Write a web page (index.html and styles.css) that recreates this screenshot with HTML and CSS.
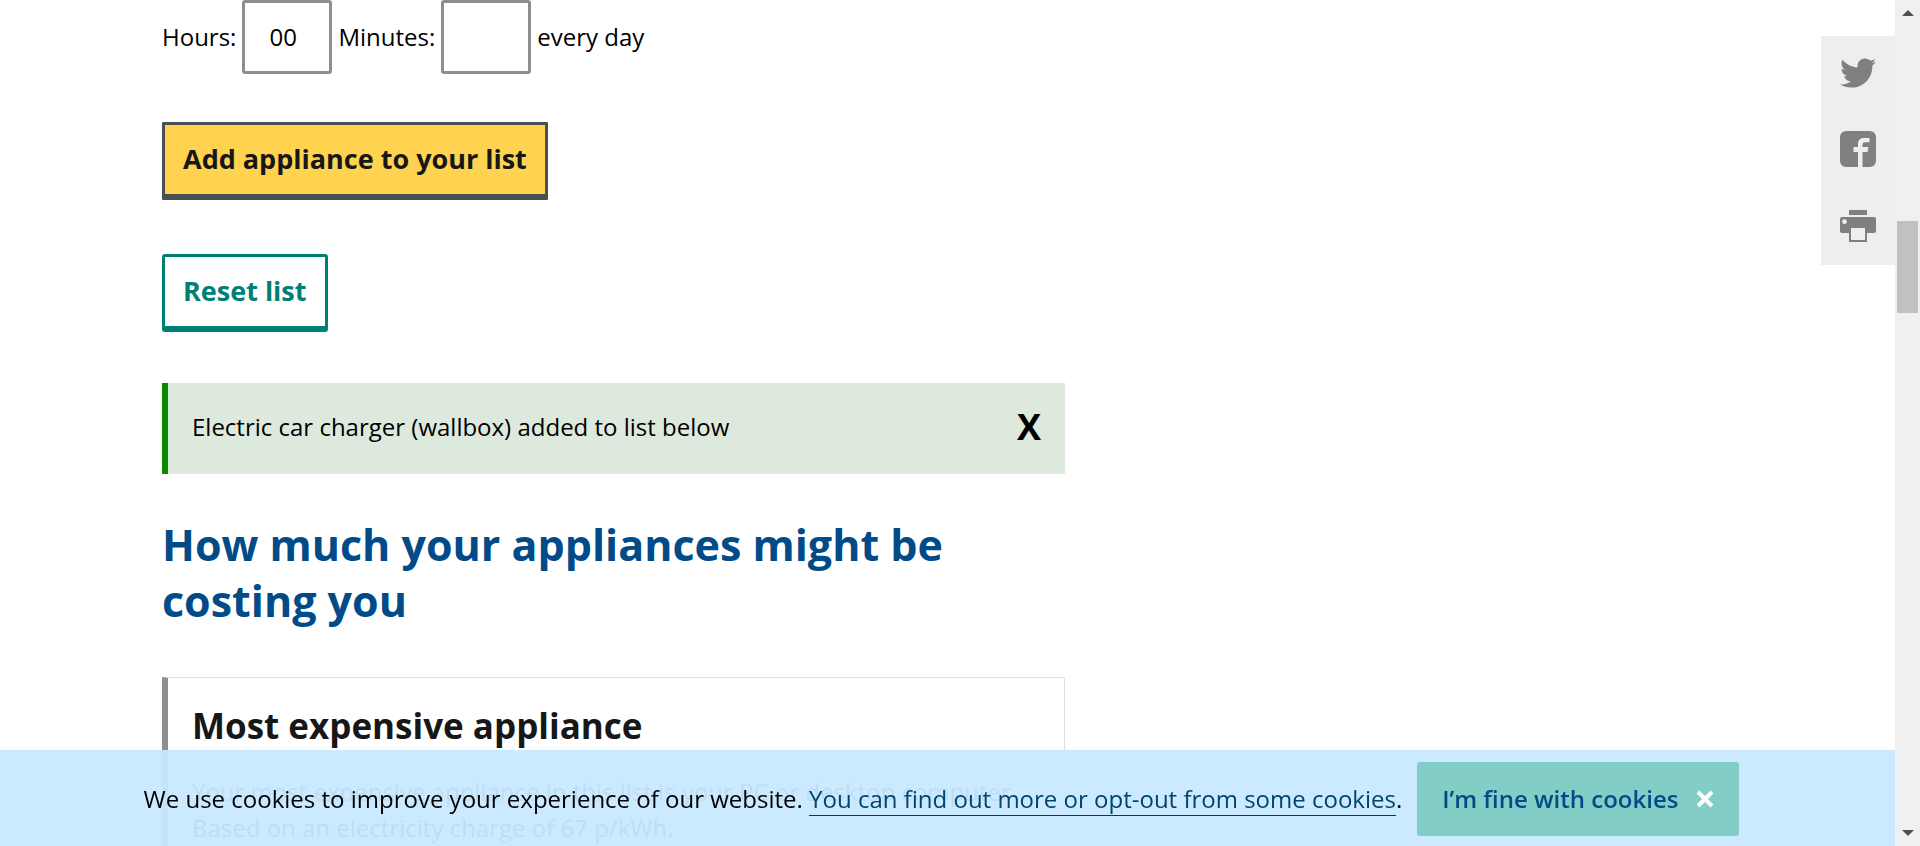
FILE: index.html
```html
<!DOCTYPE html>
<html lang="en">
<head>
<meta charset="utf-8">
<title>Appliance running costs</title>
<link rel="stylesheet" href="styles.css">
</head>
<body>
<main class="content">
  <form class="calculator">
    <div class="usage">
      <label for="hours">Hours:</label>
      <input class="time-input" id="hours" type="text" value="00">
      <label for="minutes">Minutes:</label>
      <input class="time-input" id="minutes" type="text">
      <span>every day</span>
    </div>
    <button class="button button-primary" type="button">Add appliance to your list</button>
    <button class="button button-secondary" type="reset">Reset list</button>
  </form>
  <div class="notice" role="status">
    <p class="notice-text">Electric car charger (wallbox) added to list below</p>
    <button class="notice-close" type="button" aria-label="Close message">X</button>
  </div>
  <h2 class="section-title">How much your appliances might be costing you</h2>
  <section class="card">
    <h3 class="card-title">Most expensive appliance</h3>
    <p class="card-text">Your most expensive appliance in this list is your PC or desktop computer</p>
    <p class="card-text">Based on an electricity charge of 67 p/kWh.</p>
  </section>
</main>

<nav class="share" aria-label="Share this page">
  <a class="share-link" href="#twitter" aria-label="Twitter">
    <svg class="share-icon" viewBox="0 0 512 512"><path d="M459.37 151.716c.325 4.548.325 9.097.325 13.645 0 138.72-105.583 298.558-298.558 298.558-59.452 0-114.68-17.219-161.137-47.106 8.447.974 16.568 1.299 25.34 1.299 49.055 0 94.213-16.568 130.274-44.832-46.132-.975-84.792-31.188-98.112-72.772 6.498.974 12.995 1.624 19.818 1.624 9.421 0 18.843-1.3 27.614-3.573-48.081-9.747-84.143-51.98-84.143-102.985v-1.299c13.969 7.797 30.214 12.67 47.431 13.319-28.264-18.843-46.781-51.005-46.781-87.391 0-19.492 5.197-37.36 14.294-52.954 51.655 63.675 129.3 105.258 216.365 109.807-1.624-7.797-2.599-15.918-2.599-24.04 0-57.828 46.782-104.934 104.934-104.934 30.213 0 57.502 12.67 76.67 33.137 23.715-4.548 46.456-13.32 66.599-25.34-7.798 24.366-24.366 44.833-46.132 57.827 21.117-2.273 41.584-8.122 60.426-16.243-14.292 20.791-32.161 39.308-52.628 54.253z"/></svg>
  </a>
  <a class="share-link" href="#facebook" aria-label="Facebook">
    <svg class="share-icon" viewBox="0 0 36 36"><path d="M6 0h24a6 6 0 0 1 6 6v24a6 6 0 0 1-6 6h-7.500V21h5l1-5h-6v-2.500c0-1.500.8-2.300 2.500-2.300H29.500V7h-5.500c-4 0-6 2.300-6 5.800V16h-4.500v5H18v15H6a6 6 0 0 1-6-6V6a6 6 0 0 1 6-6z"/></svg>
  </a>
  <a class="share-link" href="#print" aria-label="Print">
    <svg class="share-icon" viewBox="0 0 36 36"><path d="M9 3h18v5H9zM2 10h32a2 2 0 0 1 2 2v12a2 2 0 0 1-2 2h-7v9H9v-9H2a2 2 0 0 1-2-2V12a2 2 0 0 1 2-2zM4.500 12.300a2.400 2.400 0 1 0 0 4.800 2.400 2.400 0 0 0 0-4.800zM11 21v12h14V21z" fill-rule="evenodd"/></svg>
  </a>
</nav>

<aside class="cookie-bar" aria-label="Cookies">
  <p class="cookie-text">We use cookies to improve your experience of our website. <a class="cookie-link" href="#cookies">You can find out more or opt-out from some cookies</a>.</p>
  <button class="cookie-accept" type="button">I’m fine with cookies
    <svg class="cookie-cross" viewBox="0 0 18 18" aria-hidden="true"><path d="M2 2l14 14M16 2L2 16"/></svg>
  </button>
</aside>

<div class="scrollbar" aria-hidden="true">
  <svg class="scroll-arrow" viewBox="0 0 12 6"><path d="M0 6L6 0l6 6z"/></svg>
  <div class="scroll-track"><div class="scroll-thumb"></div></div>
  <svg class="scroll-arrow" viewBox="0 0 12 6"><path d="M0 0l6 6 6-6z"/></svg>
</div>
</body>
</html>
```
FILE: styles.css
```css
* {
  box-sizing: border-box;
}

body {
  margin: 0;
  height: 100vh;
  overflow: hidden;
  background: #fff;
  color: #000;
  font: 24px/36px "Open Sans", "Noto Sans", sans-serif;
}

h2, h3, p {
  margin: 0;
}

button, input {
  font: inherit;
  color: inherit;
}

.content {
  max-width: 1065px;
  padding-left: 162px;
}

.calculator {
  display: flex;
  flex-direction: column;
  align-items: flex-start;
}

.usage {
  display: flex;
  align-items: center;
  gap: 6px;
  margin-bottom: 48px;
}

.time-input {
  width: 90px;
  height: 74px;
  padding: 0 24px 2px;
  border: 3px solid #8c8f91;
  border-radius: 3px;
  background: #fff;
}

.button {
  height: 78px;
  padding: 0 18px 2px;
  border: 3px solid;
  border-bottom-width: 6px;
  font-size: 27px;
  font-weight: 700;
}

.button-primary {
  margin-bottom: 54px;
  border-color: #4a4f51;
  border-radius: 1px;
  background: #ffd250;
  color: #171717;
}

.button-secondary {
  margin-bottom: 51px;
  border-color: #008075;
  border-radius: 3px;
  background: #fff;
  color: #008075;
}

.notice {
  display: flex;
  align-items: center;
  justify-content: space-between;
  height: 91px;
  margin-bottom: 43px;
  padding: 0 24px 4px;
  border-left: 6px solid #0b8a00;
  background: #dee9dd;
}

.notice-close {
  padding: 0;
  border: 0;
  background: none;
  font-size: 36px;
  font-weight: 700;
}

.section-title {
  margin-bottom: 48px;
  color: #004b88;
  font-size: 43px;
  line-height: 56px;
  font-weight: 700;
}

.card {
  padding: 24px;
  border: 1px solid #e0e0e0;
  border-left: 6px solid #8c8f91;
}

.card-title {
  margin-bottom: 24px;
  color: #171717;
  font-size: 35px;
  line-height: 48px;
  font-weight: 700;
}

.share {
  position: fixed;
  top: 36px;
  right: 25px;
  display: flex;
  flex-direction: column;
  width: 74px;
  padding-bottom: 1px;
  background: #eee;
}

.share-link {
  display: flex;
  align-items: center;
  justify-content: center;
  height: 76px;
  padding-bottom: 2px;
}

.share-icon {
  width: 36px;
  height: 36px;
  fill: #808080;
}

.cookie-bar {
  position: fixed;
  right: 25px;
  bottom: 0;
  left: 0;
  display: flex;
  align-items: center;
  justify-content: center;
  gap: 15px;
  height: 96px;
  padding: 2px 24px 0 12px;
  background: rgba(200, 233, 255, 0.95);
}

.cookie-link {
  border-bottom: 1px solid #003c5f;
  color: #00446f;
  text-decoration: none;
}

.cookie-accept {
  display: flex;
  align-items: center;
  gap: 18px;
  height: 74px;
  padding: 0 25px;
  border: 0;
  border-radius: 3px;
  background: #82cec6;
  color: #004b88;
  font-weight: 600;
}

.cookie-cross {
  width: 18px;
  height: 18px;
  fill: none;
  stroke: #fff;
  stroke-width: 4;
}

.scrollbar {
  position: fixed;
  top: 0;
  right: 0;
  bottom: 0;
  display: flex;
  flex-direction: column;
  align-items: center;
  width: 25px;
  padding: 10px 2px;
  background: #f0f0f0;
}

.scroll-arrow {
  width: 12px;
  height: 6px;
  fill: #505050;
}

.scroll-track {
  flex: 1;
  width: 100%;
  padding-top: 205px;
}

.scroll-thumb {
  height: 92px;
  background: #c1c1c1;
}
```
